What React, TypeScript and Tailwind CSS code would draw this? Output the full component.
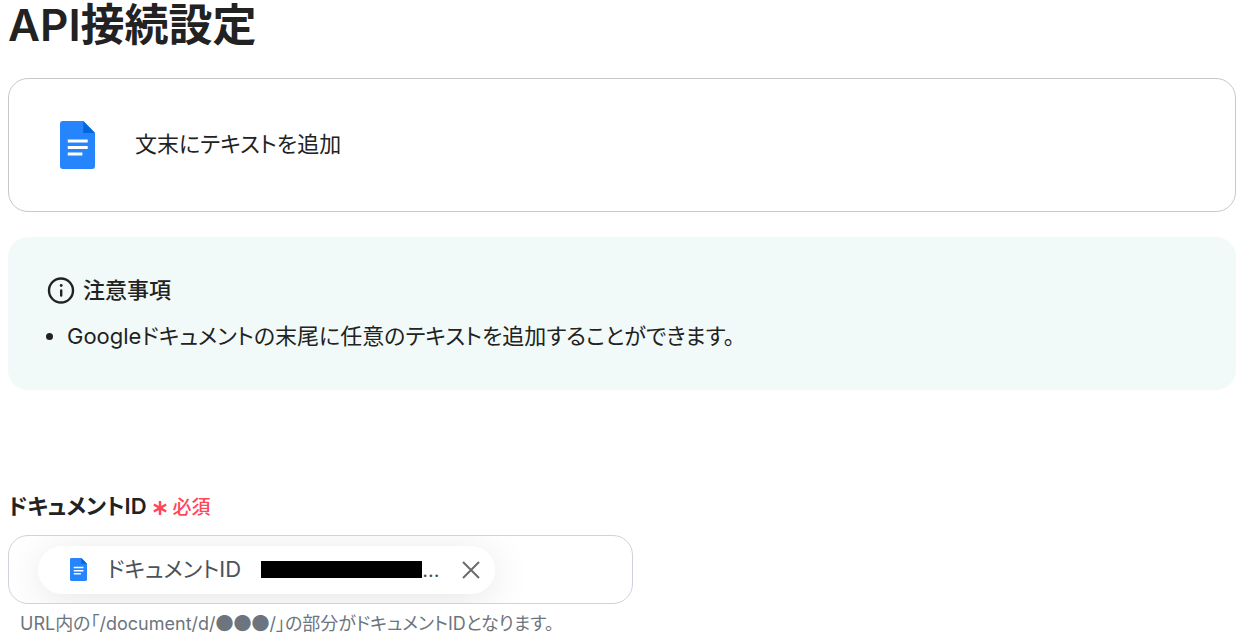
import { useState } from 'react';

const NOTES = ['Googleドキュメントの末尾に任意のテキストを追加することができます。'];

// ─── Icons ──────────────────────────────────────────────────────────────────────

function DocsIcon({ className }: { className?: string }) {
  return (
    <svg viewBox="0 0 36 48" preserveAspectRatio="none" className={className} aria-hidden="true">
      <path d="M3 0H24l12 12v33a3 3 0 0 1-3 3H3a3 3 0 0 1-3-3V3a3 3 0 0 1 3-3z" fill="#2684fc" />
      <path d="M24 0l12 12H24z" fill="#0066da" />
      <path d="M8 18.500h20.500v3H8zM8 25h20.500v3H8zM8 31.500h15v3H8z" fill="#fff" />
    </svg>
  );
}

function InfoIcon() {
  return (
    <svg viewBox="0 0 28 28" className="size-7 shrink-0" fill="none" stroke="#222" strokeLinecap="round" aria-hidden="true">
      <circle cx="14" cy="14.500" r="12" strokeWidth="2.400" />
      <path d="M14.200 14.500v5" strokeWidth="2.400" />
      <circle cx="14.200" cy="9.500" r="1.400" fill="#222" stroke="none" />
    </svg>
  );
}

function RequiredMark() {
  return (
    <svg viewBox="0 0 14 14" className="size-[14px]" stroke="#ff4757" strokeWidth="2.500" aria-hidden="true">
      <path d="M7 0v14M.8 3.500l12.400 7M13.200 3.500l-12.400 7" />
    </svg>
  );
}

// ─── Document ID field ──────────────────────────────────────────────────────────

function ValueChip({ label, onRemove }: { label: string; onRemove: () => void }) {
  return (
    <div className="flex h-12 w-[457px] max-w-full items-center rounded-full bg-white pr-3 pl-8 shadow-[0_6px_40px_rgba(0,0,0,0.1)]">
      <DocsIcon className="h-[23px] w-[17px] shrink-0" />
      <span className="ml-5 text-[22px] whitespace-nowrap text-[#4b5259]">{label}</span>
      <span className="ml-5 h-[17px] w-[161px] shrink bg-black" />
      <span className="text-xl text-[#4b5259]">...</span>
      <button type="button" aria-label="削除" onClick={onRemove} className="ml-auto grid size-6 shrink-0 place-items-center">
        <svg viewBox="0 0 18 18" className="size-[18px]" stroke="#6b6b6b" strokeWidth="2" aria-hidden="true">
          <path d="M1 1l16 16M17 1L1 17" />
        </svg>
      </button>
    </div>
  );
}

function DocumentIdField() {
  const [filled, setFilled] = useState(true);

  return (
    <section className="mt-[100px]">
      <h2 id="document-id" className="flex h-8 items-center text-[22px] font-semibold">
        ドキュメントID
        <span className="ml-1.5 flex items-center gap-1.5 pt-1 text-[19px] font-medium text-[#ff4757]">
          <RequiredMark />
          必須
        </span>
      </h2>
      <div
        role="group"
        aria-labelledby="document-id"
        className="mt-[13px] flex h-[69px] w-full max-w-[625px] items-center overflow-hidden rounded-[20px] border border-[#cfd2da] px-[29px]"
      >
        {filled && <ValueChip label="ドキュメントID" onRemove={() => setFilled(false)} />}
      </div>
      <p className="mt-1 ml-3 text-lg text-[#6c757d]">
        URL内の「/document/d/<span className="font-['Noto_Sans_CJK_JP',sans-serif]">●●●</span>/」の部分がドキュメントIDとなります。
      </p>
    </section>
  );
}

export default function App() {
  return (
    <main className="px-2 pr-1.5 font-['Inter','Noto_Sans_CJK_JP',sans-serif] text-[#222] [font-feature-settings:'palt']" lang="ja">
      <h1 className="text-[44px] leading-[50px] font-semibold">API接続設定</h1>

      <div className="mt-7 flex h-[134px] items-center gap-10 rounded-[20px] border border-[#c8c8c8] px-[51px] pb-px">
        <DocsIcon className="h-12 w-[35px] shrink-0" />
        <p className="text-[22px]">文末にテキストを追加</p>
      </div>

      <div className="mt-[25px] rounded-[20px] bg-[#f1faf9] px-[39px] pt-[35px] pb-9">
        <h2 className="flex items-center gap-2 text-[22px] leading-9 font-medium">
          <InfoIcon />
          注意事項
        </h2>
        <ul className="mt-2.5 list-disc pl-5 text-[22px] leading-9">
          {NOTES.map(note => <li key={note}>{note}</li>)}
        </ul>
      </div>

      <DocumentIdField />
    </main>
  );
}
